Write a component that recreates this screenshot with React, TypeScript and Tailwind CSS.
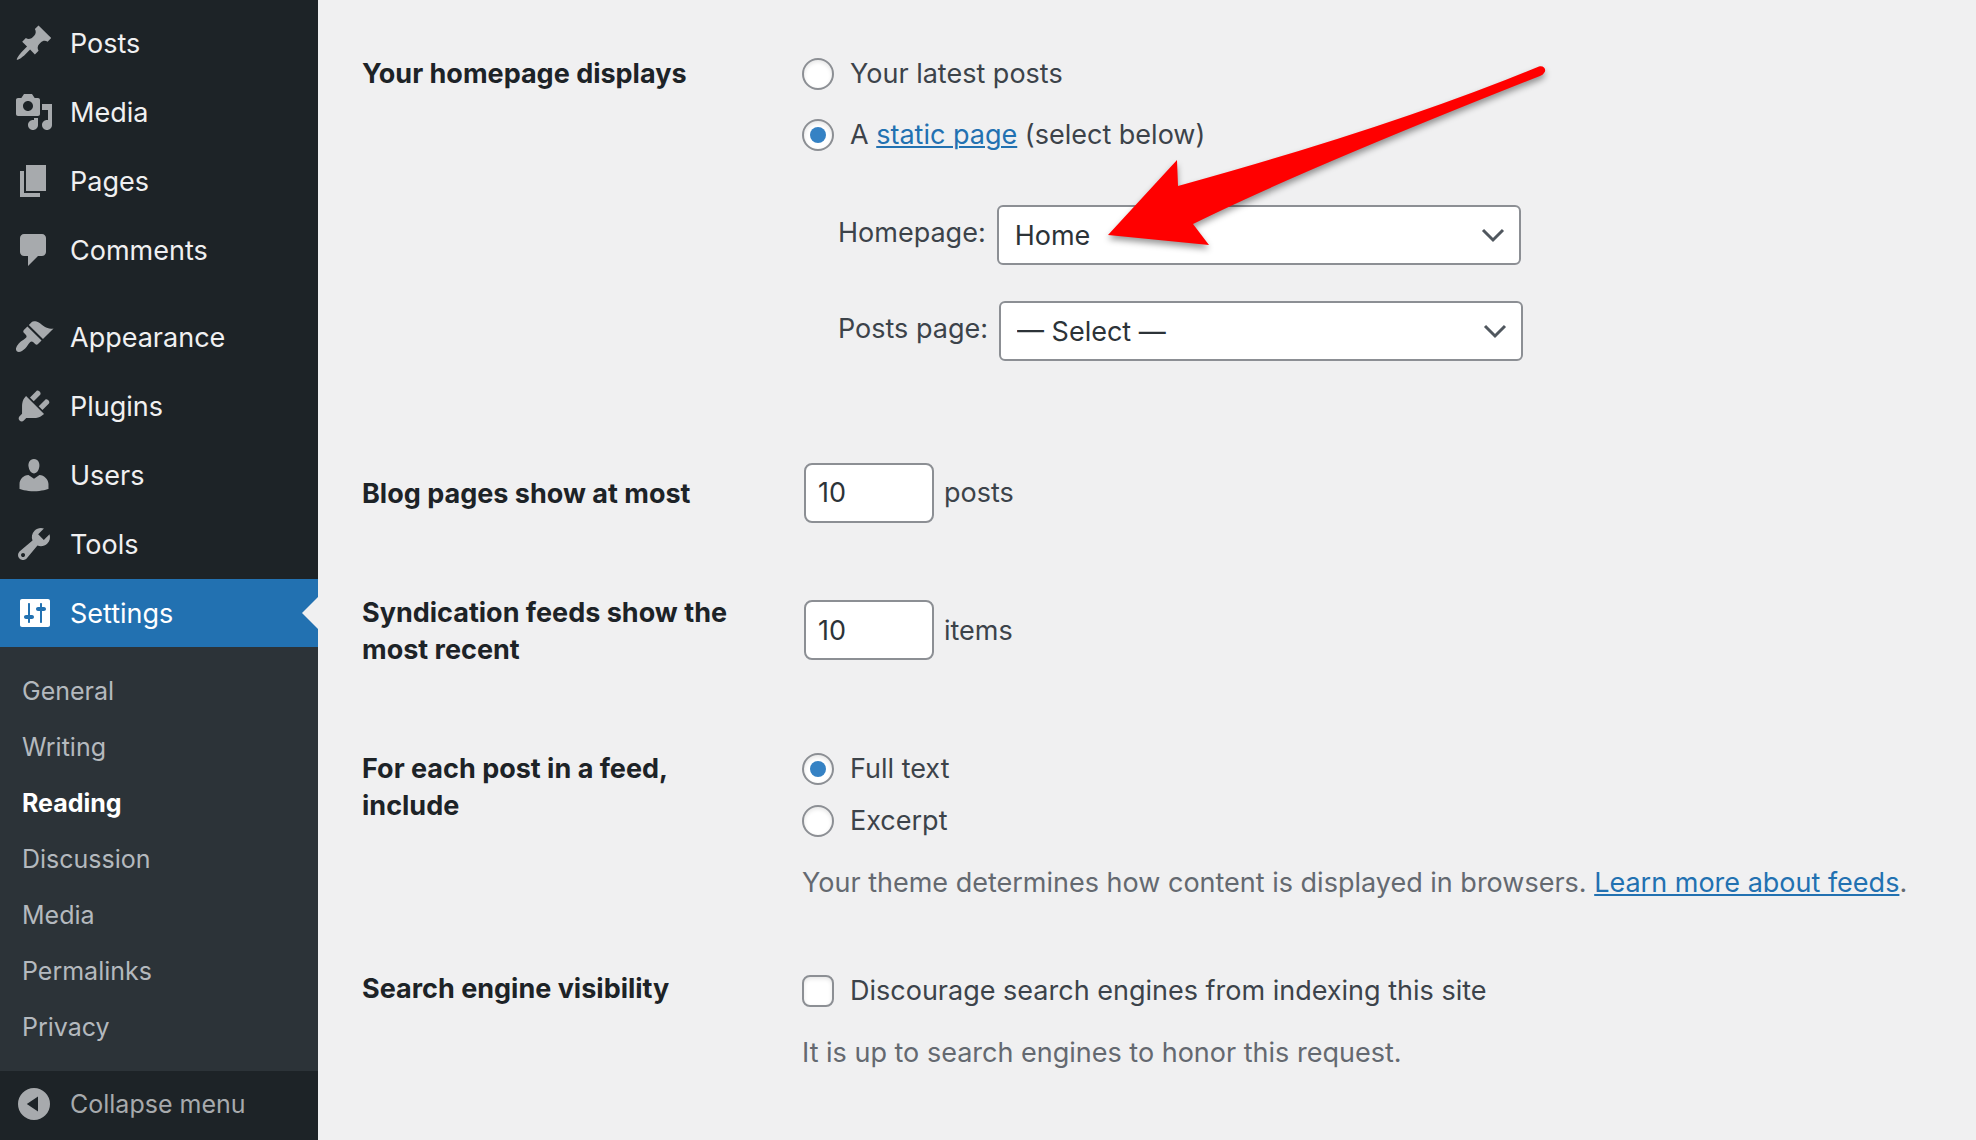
import { useState } from "react";
import type { ReactNode } from "react";
import clsx from "clsx";

interface MenuItem {
  label: string;
  icon: string;
}

const contentMenu: MenuItem[] = [
  {
    label: "Posts",
    icon: "M10.44 3.02l1.82-1.82 6.36 6.35-1.83 1.82c-1.05-.68-2.48-.57-3.41.36l-.75.75c-.92.93-1.04 2.35-.35 3.41l-1.83 1.82-2.41-2.41-2.8 2.79c-.42.42-3.38 2.71-3.8 2.29s1.86-3.39 2.28-3.81l2.79-2.79L4.1 9.36l1.83-1.82c1.05.69 2.48.57 3.4-.36l.75-.75c.93-.92 1.05-2.35.36-3.41z",
  },
  {
    label: "Media",
    icon: "M13 11V4c0-.55-.45-1-1-1h-1.67L9 1H5L3.67 3H2c-.55 0-1 .45-1 1v7c0 .55.45 1 1 1h10c.55 0 1-.45 1-1zM7 4.5c1.38 0 2.5 1.12 2.5 2.5S8.38 9.5 7 9.5 4.5 8.38 4.5 7 5.62 4.5 7 4.5zM14 6h5v10.5c0 1.38-1.12 2.5-2.5 2.5S14 17.88 14 16.5s1.12-2.5 2.5-2.5c.17 0 .34.02.5.05V9h-3V6zm-4 8.05V13h2v3.5c0 1.38-1.12 2.5-2.5 2.5S7 17.88 7 16.5 8.12 14 9.5 14c.17 0 .34.02.5.05z",
  },
  {
    label: "Pages",
    icon: "M6 15V2h10v13H6zm-1 1h8v2H3V5h2v11z",
  },
  {
    label: "Comments",
    icon: "M5 2h9c1.1 0 2 .9 2 2v7c0 1.1-.9 2-2 2h-2l-5 5v-5H5c-1.1 0-2-.9-2-2V4c0-1.1.9-2 2-2z",
  },
];

const adminMenu: MenuItem[] = [
  {
    label: "Appearance",
    icon: "M14.48 11.06L7.41 3.99l1.5-1.5c.5-.56 2.3-.47 3.51.32 1.21.8 1.43 1.28 2.91 2.1 1.18.64 2.45 1.26 4.45.85zm-.71.71L6.7 4.7 4.93 6.47c-.39.39-.39 1.02 0 1.41l1.06 1.06c.39.39.39 1.03 0 1.42-.6.6-1.43 1.11-2.21 1.69-.35.26-.7.53-1.01.84C1.43 14.23.4 16.08 1.4 17.07c.99 1 2.84-.03 4.18-1.36.31-.31.58-.66.85-1.02.57-.78 1.08-1.61 1.69-2.21.39-.39 1.02-.39 1.41 0l1.06 1.06c.39.39 1.02.39 1.41 0z",
  },
  {
    label: "Plugins",
    icon: "M13.11 4.36L9.87 7.6 8 5.73l3.24-3.24c.35-.34 1.05-.2 1.56.32.52.51.66 1.21.31 1.55zm-8 1.77l.91-1.12 9.01 9.01-1.19.84c-.71.71-2.63 1.16-3.82 1.16H6.14L4.9 17.26c-.59.59-1.54.59-2.12 0-.59-.58-.59-1.53 0-2.12l1.24-1.24v-3.88c0-1.13.4-3.19 1.09-3.89zm7.26 3.97l3.24-3.24c.34-.35 1.04-.21 1.55.31.52.51.66 1.21.31 1.55l-3.24 3.25z",
  },
  {
    label: "Users",
    icon: "M10 9.25c-2.27 0-2.73-3.44-2.73-3.44C7 4.02 7.82 2 9.97 2c2.16 0 2.98 2.02 2.71 3.81 0 0-.41 3.44-2.68 3.44zm0 2.57L12.72 10c2.39 0 4.52 2.33 4.52 4.53v2.49s-3.65 1.13-7.24 1.13c-3.65 0-7.24-1.13-7.24-1.13v-2.49c0-2.25 1.94-4.48 4.47-4.48z",
  },
  {
    label: "Tools",
    icon: "M16.68 9.77c-1.34 1.34-3.3 1.67-4.95.99l-5.41 6.52c-.99.99-2.59.99-3.58 0s-.99-2.59 0-3.57l6.52-5.42c-.68-1.65-.35-3.61.99-4.95 1.28-1.28 3.12-1.62 4.72-1.06l-2.89 2.89 2.82 2.82 2.86-2.87c.53 1.58.18 3.39-1.08 4.65zM3.81 16.21c.4.39 1.04.39 1.43 0 .4-.4.4-1.04 0-1.43-.39-.4-1.03-.4-1.43 0-.39.39-.39 1.03 0 1.43z",
  },
  {
    label: "Settings",
    icon: "M18 16V4c0-.55-.45-1-1-1H4c-.55 0-1 .45-1 1v12c0 .55.45 1 1 1h13c.55 0 1-.45 1-1zM8 11h1c.55 0 1 .45 1 1s-.45 1-1 1H8v1.5c0 .28-.22.5-.5.5s-.5-.22-.5-.5V13H6c-.55 0-1-.45-1-1s.45-1 1-1h1V5.5c0-.28.22-.5.5-.5s.5.22.5.5V11zm5-2h-1c-.55 0-1-.45-1-1s.45-1 1-1h1V5.5c0-.28.22-.5.5-.5s.5.22.5.5V7h1c.55 0 1 .45 1 1s-.45 1-1 1h-1v5.5c0 .28-.22.5-.5.5s-.5-.22-.5-.5V9z",
  },
];

const settingsPages = ["General", "Writing", "Reading", "Discussion", "Media", "Permalinks", "Privacy"];

const radioClass =
  "relative size-8 shrink-0 appearance-none rounded-full border-2 border-[#8c8f94] bg-white shadow-[inset_0_2px_4px_rgba(0,0,0,0.1)] before:absolute before:inset-1.5 before:rounded-full checked:before:bg-[#3582c4]";

const linkClass = "text-[#2271b1] underline decoration-2 underline-offset-2";

function MenuLink({ item, active }: { item: MenuItem; active?: boolean }) {
  return (
    <a
      href="#"
      className={clsx(
        "relative flex h-17 items-center gap-4 pl-3.5",
        active ? "bg-[#2271b1] text-white" : "text-[#f0f0f1]",
      )}
    >
      <svg viewBox="0 0 20 20" className={clsx("size-10", active ? "fill-white" : "fill-[#a7aaad]")}>
        <path d={item.icon} />
      </svg>
      {item.label}
      {active && (
        <span className="absolute right-0 border-y-16 border-r-16 border-y-transparent border-r-[#f0f0f1]" />
      )}
    </a>
  );
}

function Sidebar() {
  return (
    <nav className="flex w-[318px] shrink-0 flex-col bg-[#1d2327] pt-[9px]">
      <div className="flex flex-col gap-px">
        {contentMenu.map((item) => (
          <MenuLink key={item.label} item={item} />
        ))}
      </div>
      <div className="mt-[19px] flex flex-col gap-px">
        {adminMenu.map((item) => (
          <MenuLink key={item.label} item={item} active={item.label === "Settings"} />
        ))}
      </div>
      <div className="flex flex-col bg-[#2c3338] py-4 text-[25px]">
        {settingsPages.map((page) => (
          <a
            key={page}
            href="#"
            className={clsx(
              "flex h-14 items-center pl-[22px]",
              page === "Reading" ? "font-bold text-white" : "text-[#b4b9be]",
            )}
          >
            {page}
          </a>
        ))}
      </div>
      <button type="button" className="flex h-[66px] items-center gap-4 pl-3.5 text-[25px] text-[#a7aaad]">
        <svg viewBox="0 0 20 20" className="size-10 fill-[#a7aaad]">
          <path fillRule="evenodd" d="M10 2a8 8 0 1 0 0 16 8 8 0 0 0 0-16zM12 6.3v7.4L6.4 10z" />
        </svg>
        Collapse menu
      </button>
    </nav>
  );
}

function Row({ title, children }: { title: string; children: ReactNode }) {
  return (
    <section className="flex">
      <h2 className="w-[440px] shrink-0 pt-10 pr-14 pb-[42px] font-bold text-[#1d2327]">{title}</h2>
      <div className="flex min-w-0 flex-1 flex-col justify-center">{children}</div>
    </section>
  );
}

function PageSelect({ id, label, options }: { id: string; label: string; options: string[] }) {
  return (
    <div className="flex items-center gap-[11px]">
      <label htmlFor={id} className="pb-1.5">
        {label}
      </label>
      <div className="relative w-[524px]">
        <select
          id={id}
          className="h-15 w-full appearance-none rounded-md border-2 border-[#8c8f94] bg-white px-4 text-[#2c3338]"
        >
          {options.map((option) => (
            <option key={option}>{option}</option>
          ))}
        </select>
        <svg
          viewBox="0 0 32 32"
          className="pointer-events-none absolute top-3.5 right-3 size-8 fill-none stroke-[#50575e] stroke-3"
        >
          <path d="M6 11l10 10 10-10" />
        </svg>
      </div>
    </div>
  );
}

function CountField({ id, title, unit }: { id: string; title: string; unit: string }) {
  const [count, setCount] = useState("10");

  return (
    <div className="flex items-center gap-2.5 pb-1 pl-0.5">
      <input
        id={id}
        type="text"
        inputMode="numeric"
        aria-label={title}
        value={count}
        onChange={(e) => setCount(e.target.value)}
        className="h-15 w-[130px] rounded-lg border-2 border-[#8c8f94] bg-white px-3 text-[#2c3338]"
      />
      <label htmlFor={id}>{unit}</label>
    </div>
  );
}

function Arrow() {
  return (
    <svg
      viewBox="0 0 450 190"
      className="pointer-events-none absolute top-[61px] left-[784px] h-[190px] w-[450px] overflow-visible fill-[#ff0000] drop-shadow-[0_4px_3px_rgba(0,0,0,0.4)]"
    >
      <path d="M6 174L75 99L76 125Q290 66 437 5.500C442 4 445 9 442 12Q441 14 438 15Q200 109 91 163L107 184Z" />
    </svg>
  );
}

export default function App() {
  return (
    <div className="flex min-h-screen bg-[#f0f0f1] font-['Inter',sans-serif] text-[27px] leading-[37px]">
      <Sidebar />
      <main className="relative min-w-0 flex-1 pt-[15px] pl-11 text-[#3c434a]">
        <Row title="Your homepage displays">
          <div className="flex flex-col gap-6 pt-10 pb-[52px]">
            <label className="flex items-center gap-4">
              <input type="radio" name="show_on_front" className={radioClass} />
              Your latest posts
            </label>
            <label className="flex items-center gap-4">
              <input type="radio" name="show_on_front" defaultChecked className={radioClass} />
              <span>
                A{" "}
                <a href="#" className={linkClass}>
                  static page
                </a>{" "}
                (select below)
              </span>
            </label>
          </div>
          <div className="flex flex-col gap-9 pb-[74px] pl-9">
            <PageSelect id="page_on_front" label="Homepage:" options={["Home", "— Select —"]} />
            <PageSelect id="page_for_posts" label="Posts page:" options={["— Select —", "Home"]} />
          </div>
        </Row>

        <Row title="Blog pages show at most">
          <CountField id="posts_per_page" title="Blog pages show at most" unit="posts" />
        </Row>

        <Row title="Syndication feeds show the most recent">
          <CountField id="posts_per_rss" title="Syndication feeds show the most recent" unit="items" />
        </Row>

        <Row title="For each post in a feed, include">
          <div className="flex flex-col gap-[15px] pt-10">
            <label className="flex items-center gap-4">
              <input type="radio" name="rss_use_excerpt" defaultChecked className={radioClass} />
              Full text
            </label>
            <label className="flex items-center gap-4">
              <input type="radio" name="rss_use_excerpt" className={radioClass} />
              Excerpt
            </label>
          </div>
          <p className="pt-[25px] pb-[29px] text-[#646970]">
            Your theme determines how content is displayed in browsers.{" "}
            <a href="#" className={linkClass}>
              Learn more about feeds
            </a>
            .
          </p>
        </Row>

        <Row title="Search engine visibility">
          <label className="flex items-center gap-4 pt-[42px]">
            <input
              type="checkbox"
              className="size-8 shrink-0 appearance-none rounded-lg border-2 border-[#8c8f94] bg-white shadow-[inset_0_2px_4px_rgba(0,0,0,0.1)] checked:bg-[#3582c4]"
            />
            Discourage search engines from indexing this site
          </label>
          <p className="pt-[25px] pb-[29px] text-[#646970]">It is up to search engines to honor this request.</p>
        </Row>

        <Arrow />
      </main>
    </div>
  );
}
